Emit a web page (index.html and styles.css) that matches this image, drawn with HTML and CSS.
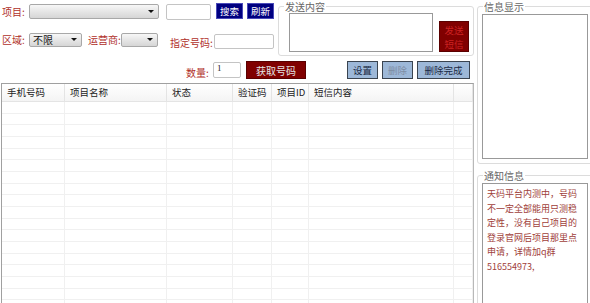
FILE: index.html
```html
<!DOCTYPE html>
<html lang="zh-CN">
<head>
  <meta charset="UTF-8">
  <title>天码平台</title>
  <link rel="stylesheet" href="styles.css">
</head>
<body>
<div class="win">
  <div class="left">
    <div class="top">
      <div class="fields">
        <div class="row row1">
          <span class="lbl w27">项目:</span>
          <div class="combo c-proj"><span class="arrow"></span></div>
          <div class="edit e-search"></div>
          <div class="btn navy b-search">搜索</div>
          <div class="btn navy b-refresh">刷新</div>
        </div>
        <div class="row row2">
          <span class="lbl w27">区域:</span>
          <div class="combo c-area"><span class="val">不限</span><span class="arrow"></span></div>
          <span class="lbl l-isp">运营商:</span>
          <div class="combo c-isp"><span class="arrow"></span></div>
          <span class="lbl l-num">指定号码:</span>
          <div class="edit e-num"></div>
        </div>
      </div>
      <div class="group sendbox">
        <span class="legend">发送内容</span>
        <div class="edit e-msg"></div>
        <div class="btn send">发送<br>短信</div>
      </div>
    </div>
    <div class="row row3">
      <span class="lbl l-qty">数量:</span>
      <div class="edit e-qty">1</div>
      <div class="btn maroon b-get">获取号码</div>
      <div class="btn pale b-set">设置</div>
      <div class="btn pale off b-del">删除</div>
      <div class="btn pale b-done">删除完成</div>
    </div>
    <div class="grid" id="grid">
      <div class="gr head">
        <div>手机号码</div><div>项目名称</div><div>状态</div><div>验证码</div><div>项目ID</div><div>短信内容</div><div></div>
      </div>
    </div>
  </div>
  <div class="right">
    <div class="group infobox">
      <span class="legend">信息显示</span>
      <div class="edit e-info"></div>
    </div>
    <div class="group notebox">
      <span class="legend">通知信息</span>
      <div class="edit e-note">天码平台内测中，号码<br>不一定全部能用只测稳<br>定性，没有自己项目的<br>登录官网后项目那里点<br>申请，详情加q群<br>516554973,</div>
    </div>
  </div>
</div>
<script>
  const grid = document.getElementById('grid');
  for (let i = 0; i < 19; i++) {
    const row = document.createElement('div');
    row.className = 'gr';
    for (let c = 0; c < 7; c++) {
      row.appendChild(document.createElement('div'));
    }
    grid.appendChild(row);
  }
</script>
</body>
</html>
```

FILE: styles.css
```css
body { margin: 0; background: #fff; font-family: "Noto Sans CJK SC", "Noto Sans", sans-serif; font-size: 9.5px; color: #222; overflow: hidden; }
.win { display: flex; width: 590px; height: 303px; overflow: hidden; }
.left { width: 475px; flex: none; }
.top { display: flex; height: 58px; }
.fields { width: 278px; flex: none; }
.row { display: flex; align-items: center; position: relative; }
.row1 { height: 16px; margin-top: 4px; }
.row2 { height: 16px; margin-top: 12px; }
.lbl { color: #b0302a; white-space: nowrap; line-height: 12px; font-size: 10px; }
.w27 { width: 27px; margin-left: 2px; }
.combo { position: relative; height: 13px; border: 1px solid #a8a8a8; border-radius: 2px; background: linear-gradient(#f7f7f7, #e4e4e4 55%, #d6d6d6); box-sizing: content-box; }
.combo .val { position: absolute; left: 3px; top: 0; line-height: 13px; color: #111; font-size: 10px; }
.arrow { position: absolute; right: 4px; top: 5px; border-left: 3px solid transparent; border-right: 3px solid transparent; border-top: 3px solid #111; }
.c-proj { width: 128px; margin-top: -1px; }
.edit { border: 1px solid #a0a0a0; background: #fff; box-sizing: border-box; }
.e-search { width: 45px; height: 16px; margin-left: 7px; border-color: #c4c4c4; border-radius: 2px; }
.btn { display: flex; align-items: center; justify-content: center; box-sizing: border-box; white-space: nowrap; }
.navy { background: #000080; color: #fff; height: 16px; border: 1px solid #4a4ab8; }
.b-search { width: 27px; margin-left: 5px; margin-top: -2px; }
.b-refresh { width: 27px; margin-left: 4px; margin-top: -2px; }
.c-area { width: 51px; height: 12px; }
.c-area .val { line-height: 12px; }
.c-area .arrow { top: 4px; }
.l-isp { margin-left: 6px; width: 33px; }
.c-isp { width: 35px; height: 12px; }
.c-isp .arrow { top: 4px; }
.l-num { margin-left: 12px; width: 44px; margin-top: 5px; }
.e-num { width: 60px; height: 15px; border-color: #c4c4c4; border-radius: 2px; margin-top: 2px; }
.group { position: relative; border: 1px solid #dcdcdc; border-radius: 3px; box-sizing: border-box; }
.legend { position: absolute; left: 5px; top: -6px; background: #fff; color: #666; padding: 0 1px; line-height: 11px; font-size: 10px; }
.sendbox { width: 196px; height: 50px; margin-top: 6px; display: flex; align-items: flex-start; }
.e-msg { width: 144px; height: 39px; margin: 6px 0 0 10px; border-color: #999; }
.send { width: 30px; height: 31px; margin: 14px 0 0 6px; background: #800000; color: #c22; line-height: 14px; text-align: center; border: 1px solid #5a0000; }
.row3 { height: 18px; margin-top: 3px; }
.l-qty { margin-left: 186px; margin-top: 6px; width: 27px; }
.e-qty { width: 28px; height: 16px; border-color: #c4c4c4; border-radius: 2px; padding-left: 3px; line-height: 10px; font-size: 9px; font-family: "Liberation Serif", serif; }
.maroon { width: 60px; height: 18px; margin-left: 5px; background: #800000; color: #e4e4e4; border: 1px solid #5a0000; font-size: 10px; }
.pale { height: 18px; background: #9db8d8; border: 1px solid #3a4450; color: #1a2a44; }
.b-set { width: 31px; margin-left: 41px; }
.b-del { width: 31px; margin-left: 4px; }
.off { color: #7d8da4; }
.b-done { width: 53px; margin-left: 4px; }
.grid { margin: 4px 0 0 1px; width: 473px; height: 240px; border-left: 1px solid #a0a0a0; border-top: 1px solid #a0a0a0; border-right: 1px solid #b8b8b8; box-sizing: border-box; overflow: hidden; }
.gr { display: grid; grid-template-columns: 63px 102px 66px 39px 37px 145px 19px; height: 11.67px; box-sizing: border-box; border-bottom: 1px solid #f0f0f0; }
.gr > div { border-right: 1px solid #f0f0f0; }
.gr.head { height: 18px; background: linear-gradient(#ffffff, #f4f4f4); border-bottom: 1px solid #e4e4e4; }
.gr.head > div { border-right: 1px solid #e4e4e4; padding-left: 5px; line-height: 17px; color: #222; white-space: nowrap; }
.right { flex: 1; padding-left: 2px; }
.infobox { height: 158px; margin-top: 6px; width: 125px; }
.e-info { width: 106px; height: 145px; margin: 7px 0 0 4px; border-color: #999; }
.notebox { height: 150px; margin-top: 11px; width: 125px; }
.e-note { width: 106px; height: 140px; margin: 7px 0 0 4px; border-color: #999; padding: 3px 0 0 4px; color: #a0403a; font-size: 9px; line-height: 14.5px; white-space: nowrap; }
```
